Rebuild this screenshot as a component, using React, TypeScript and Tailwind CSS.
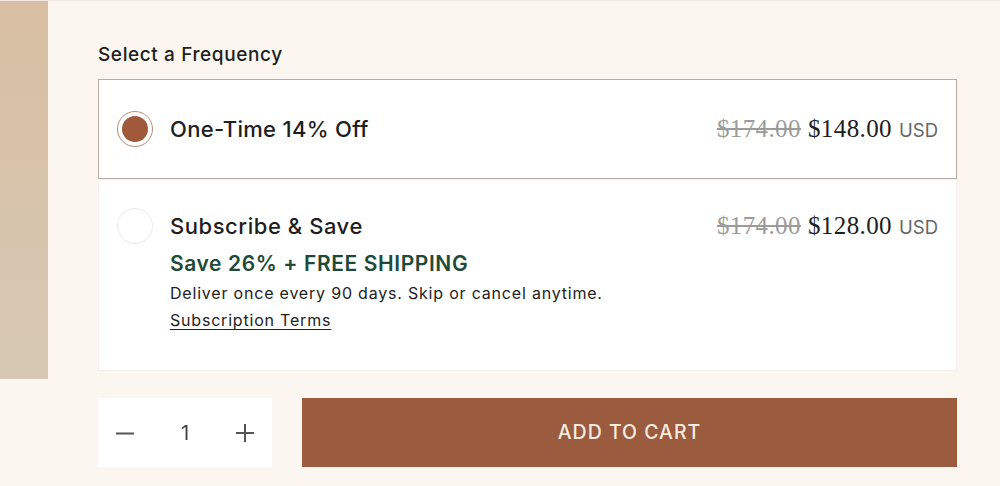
import React, { useState } from "react";

const sans = "font-['Inter','Noto_Sans',sans-serif]";
const serif = "font-['Liberation_Serif','DejaVu_Serif',serif]";

export default function App() {
  const [plan, setPlan] = useState<"once" | "sub">("once");
  const [qty, setQty] = useState(1);

  return (
    <div className={`w-[1000px] h-[486px] bg-[#fbf6f0] flex border-t border-[#f0ebe4] ${sans}`}>
      {/* product image edge */}
      <div className="w-[48px] h-[378px] shrink-0 bg-gradient-to-b from-[#d8bea2] to-[#d6c8b4]" />

      <div className="ml-[50px] w-[859px] flex flex-col">
        <h2 className="mt-[43px] mb-[13px] text-[19px] leading-[22px] font-medium text-[#1e1e1e] tracking-[0.6px]">
          Select a Frequency
        </h2>

        {/* one-time */}
        <button
          onClick={() => setPlan("once")}
          className={`h-[100px] flex items-center px-[18px] text-left bg-white border ${
            plan === "once" ? "border-[#bcaa9d]" : "border-transparent"
          }`}
        >
          <span className="w-[36px] h-[36px] rounded-full border border-[#b98b76] flex items-center justify-center shrink-0">
            {plan === "once" && <span className="w-[26px] h-[26px] rounded-full bg-[#a05a3b]" />}
          </span>
          <span className="ml-[17px] text-[22px] font-medium text-[#1e1e1e] tracking-[0.3px]">One-Time 14% Off</span>
          <span className="ml-auto flex items-baseline gap-[7px]">
            <span className={`${serif} text-[25px] text-[#9b9b9b] line-through tracking-[0.4px]`}>$174.00</span>
            <span className={`${serif} text-[25px] text-[#1e1e1e] tracking-[0.4px]`}>$148.00</span>
            <span className="text-[18.5px] text-[#666]">USD</span>
          </span>
        </button>

        {/* subscribe */}
        <button
          onClick={() => setPlan("sub")}
          className={`h-[192px] flex items-start px-[18px] pt-[28px] text-left bg-white border ${
            plan === "sub" ? "border-[#bcaa9d]" : "border-[#f6f1ec]"
          }`}
        >
          <span className="w-[36px] h-[36px] rounded-full border border-[#eeeae6] flex items-center justify-center shrink-0">
            {plan === "sub" && <span className="w-[26px] h-[26px] rounded-full bg-[#a05a3b]" />}
          </span>
          <span className="ml-[17px] flex flex-col">
            <span className="mt-[4px] text-[22px] leading-[28px] font-medium text-[#1e1e1e] tracking-[0.55px]">
              Subscribe &amp; Save
            </span>
            <span className="mt-[10px] text-[21px] leading-[28px] font-semibold text-[#1f4a38] tracking-[0.6px]">
              Save 26% + FREE SHIPPING
            </span>
            <span className="mt-[3px] text-[16px] leading-[24px] text-[#222] tracking-[0.8px]">
              Deliver once every 90 days. Skip or cancel anytime.
            </span>
            <span className="mt-[4px] text-[16px] leading-[22px] text-[#222] tracking-[0.8px] underline underline-offset-[3px]">
              Subscription Terms
            </span>
          </span>
          <span className="ml-auto -mt-[1px] flex items-baseline gap-[7px]">
            <span className={`${serif} text-[25px] text-[#9b9b9b] line-through tracking-[0.4px]`}>$174.00</span>
            <span className={`${serif} text-[25px] text-[#1e1e1e] tracking-[0.4px]`}>$128.00</span>
            <span className="text-[18.5px] text-[#666]">USD</span>
          </span>
        </button>

        <div className="mt-[27px] flex gap-[30px] h-[69px]">
          <div className="w-[174px] bg-white flex items-center justify-between px-[16px] text-[#555]">
            <button onClick={() => setQty(Math.max(1, qty - 1))} className="w-[22px] h-[22px] flex items-center justify-center">
              <svg width="20" height="20" viewBox="0 0 20 20">
                <path d="M1 10.5h18" stroke="#555" strokeWidth="2" />
              </svg>
            </button>
            <span className="text-[20px] text-[#444]">{qty}</span>
            <button onClick={() => setQty(qty + 1)} className="w-[22px] h-[22px] flex items-center justify-center">
              <svg width="20" height="20" viewBox="0 0 20 20">
                <path d="M1 10h18M10 1v18" stroke="#555" strokeWidth="2" />
              </svg>
            </button>
          </div>
          <button className="flex-1 bg-[#9a5b3e] text-[#f7ebe0] text-[19.5px] font-medium tracking-[1px]">
            ADD TO CART
          </button>
        </div>
      </div>
    </div>
  );
}
